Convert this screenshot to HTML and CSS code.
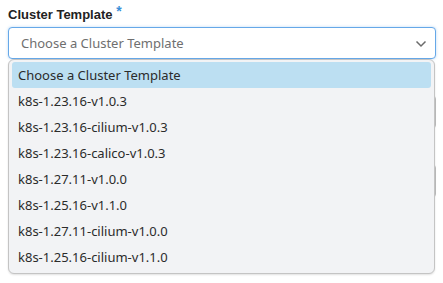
FILE: index.html
```html
<!DOCTYPE html>
<html>
<head>
<meta charset="utf-8">
<link rel="stylesheet" href="styles.css">
</head>
<body>
<div class="form">
  <div class="field">
    <label class="label">Cluster Template <span class="req">*</span></label>
    <div class="select-wrap">
      <div class="select">
        <span class="placeholder">Choose a Cluster Template</span>
        <svg class="chev" width="12" height="8" viewBox="0 0 12 8"><path d="M1.5 1.5 L6 6 L10.5 1.5" fill="none" stroke="#6b6b6b" stroke-width="1.5"/></svg>
      </div>
      <ul class="menu">
        <li class="opt active">Choose a Cluster Template</li>
        <li class="opt">k8s-1.23.16-v1.0.3</li>
        <li class="opt">k8s-1.23.16-cilium-v1.0.3</li>
        <li class="opt">k8s-1.23.16-calico-v1.0.3</li>
        <li class="opt">k8s-1.27.11-v1.0.0</li>
        <li class="opt">k8s-1.25.16-v1.1.0</li>
        <li class="opt">k8s-1.27.11-cilium-v1.0.0</li>
        <li class="opt">k8s-1.25.16-cilium-v1.1.0</li>
      </ul>
    </div>
  </div>
  <div class="behind">
    <div class="ghost"></div>
    <div class="ghost"></div>
  </div>
</div>
</body>
</html>
```

FILE: styles.css
```css
html, body {
  margin: 0;
  padding: 0;
  background: #ffffff;
}
body {
  min-height: 283px;
}
.form {
  padding: 0 7px 0 8px;
  font-family: "Noto Sans", "Open Sans", sans-serif;
}
.field {
  display: flex;
  flex-direction: column;
}
.label {
  font-family: "Liberation Sans", Arial, sans-serif;
  font-weight: bold;
  font-size: 13px;
  color: #222;
  line-height: 16px;
  padding-top: 3px;
  margin-bottom: 4px;
}
.req {
  color: #3a8fd8;
  font-size: 14px;
  vertical-align: 3px;
}
.select-wrap {
  position: relative;
}
.select {
  height: 30px;
  border: 1px solid #66a8e8;
  border-radius: 4px;
  box-shadow: 0 0 3px rgba(102, 168, 232, 0.45);
  display: flex;
  align-items: center;
  justify-content: space-between;
  padding: 0 8px 0 12px;
  background: #fff;
}
.placeholder {
  font-size: 13px;
  color: #6f6f6f;
}
.chev {
  display: block;
  margin-top: 2px;
}
.menu {
  position: absolute;
  left: 0;
  right: 1px;
  top: 32px;
  margin: 0;
  padding: 2px 3px 3px;
  list-style: none;
  background: #f2f3f5;
  border: 1px solid #c4c4c4;
  border-radius: 6px;
  box-shadow: 0 1px 2px rgba(0, 0, 0, 0.12);
  z-index: 2;
}
.opt {
  height: 26px;
  line-height: 26px;
  padding-left: 6px;
  font-size: 13px;
  color: #2b2b2b;
  border-radius: 3px;
}
.opt.active {
  background: #bcdff2;
}
.behind {
  display: flex;
  flex-direction: column;
  gap: 35px;
  padding-top: 36px;
}
.ghost {
  height: 32px;
  border: 1px solid #bdbdbd;
  border-radius: 4px;
}
```
